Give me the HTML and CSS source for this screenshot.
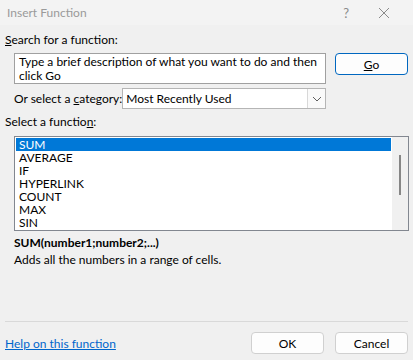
FILE: index.html
```html
<!DOCTYPE html>
<html lang="en">
<head>
    <meta charset="UTF-8">
    <meta name="viewport" content="width=device-width, initial-scale=1.0">
    <title>Insert Function</title>
    <link rel="stylesheet" href="styles.css">
</head>
<body>
    <div class="dialog">
        <div class="titlebar">
            <span class="title">Insert Function</span>
            <span class="help">?</span>
            <svg class="close" width="12" height="12" viewBox="0 0 12 12"><path d="M1 1L11 11M11 1L1 11" stroke="#8a8a8a" stroke-width="1" fill="none"/></svg>
        </div>
        <div class="content">
            <div class="label"><u>S</u>earch for a function:</div>
            <div class="search-row">
                <div class="search-box">Type a brief description of what you want to do and then click Go</div>
                <button class="btn btn-go"><u>G</u>o</button>
            </div>
            <div class="category-row">
                <span class="cat-label">Or select a <u>c</u>ategory:</span>
                <div class="select">
                    <span class="select-value">Most Recently Used</span>
                    <span class="select-arrow"><svg width="10" height="6" viewBox="0 0 10 6"><path d="M1 1L5 5L9 1" stroke="#606060" stroke-width="1" fill="none"/></svg></span>
                </div>
            </div>
            <div class="label label-fn">Select a functio<u>n</u>:</div>
            <div class="listbox">
                <div class="items">
                    <div class="item selected">SUM</div>
                    <div class="item">AVERAGE</div>
                    <div class="item">IF</div>
                    <div class="item">HYPERLINK</div>
                    <div class="item">COUNT</div>
                    <div class="item">MAX</div>
                    <div class="item">SIN</div>
                </div>
                <div class="scrollbar"><div class="thumb"></div></div>
            </div>
            <div class="signature">SUM(number1;number2;...)</div>
            <div class="desc">Adds all the numbers in a range of cells.</div>
        </div>
        <div class="footer">
            <a class="help-link" href="#">Help on this function</a>
            <div class="buttons">
                <button class="btn">OK</button>
                <button class="btn">Cancel</button>
            </div>
        </div>
    </div>
</body>
</html>
```

FILE: styles.css
```css
*{box-sizing:border-box}
body{margin:0;background:#f0f0f0;font-family:Lato,"Liberation Sans",sans-serif;font-size:12px;color:#000}
.dialog{width:413px;height:360px;display:flex;flex-direction:column;background:#f0f0f0;overflow:hidden}
.titlebar{height:25px;display:flex;align-items:center;background:#f3f3f3;padding-left:7px}
.title{color:#9a9a9a;flex:1;font-size:12px}
.help{color:#8a8a8a;font-size:13px;margin-right:29px}
.close{margin-right:23px}
.content{padding:0 5px;flex:1}
.label{margin-top:7px;line-height:16px}
.search-row{display:flex;align-items:flex-start;margin:5px 0 0 9px}
.search-box{width:312px;height:31px;background:#fff;border:1px solid #a0a0a0;padding:1px 4px;line-height:14px}
.btn{font-family:inherit;font-size:12px;color:#000;background:#fdfdfd;border:1px solid #d0d0d0;border-radius:4px;width:73px;height:22px;padding:0}
.btn-go{margin-left:9px;border-color:#0067c0}
.category-row{display:flex;align-items:center;margin:4px 0 0 9px}
.cat-label{white-space:nowrap;margin-right:auto}
.select{width:205px;height:21px;background:#fff;border:1px solid #b5b5b5;display:flex;align-items:center;margin-right:82px}
.select-value{flex:1;padding-left:3px}
.select-arrow{width:18px;height:19px;border-left:1px solid #d8d8d8;display:flex;align-items:center;justify-content:center;background:#fafafa}
.label-fn{margin-top:5px}
.listbox{margin:6px 0 0 9px;width:395px;height:95px;border:1px solid #828790;display:flex;background:#fff}
.items{flex:1;padding:1px 1px 0}
.item{height:13px;line-height:13px;padding-left:3px}
.item.selected{background:#0078d7;color:#fff}
.scrollbar{width:16px;background:#f0f0f0;position:relative}
.thumb{position:absolute;left:7px;top:18px;width:2px;height:40px;background:#868686}
.signature{font-weight:bold;margin:5px 0 0 9px;line-height:14px}
.desc{margin:3px 0 0 9px;line-height:14px}
.footer{border-top:1px solid #d9d9d9;margin:0 5px;height:39px;display:flex;align-items:center;padding-top:4px}
.help-link{color:#0066cc;text-decoration:underline;flex:1}
.buttons{display:flex;gap:11px}
```
